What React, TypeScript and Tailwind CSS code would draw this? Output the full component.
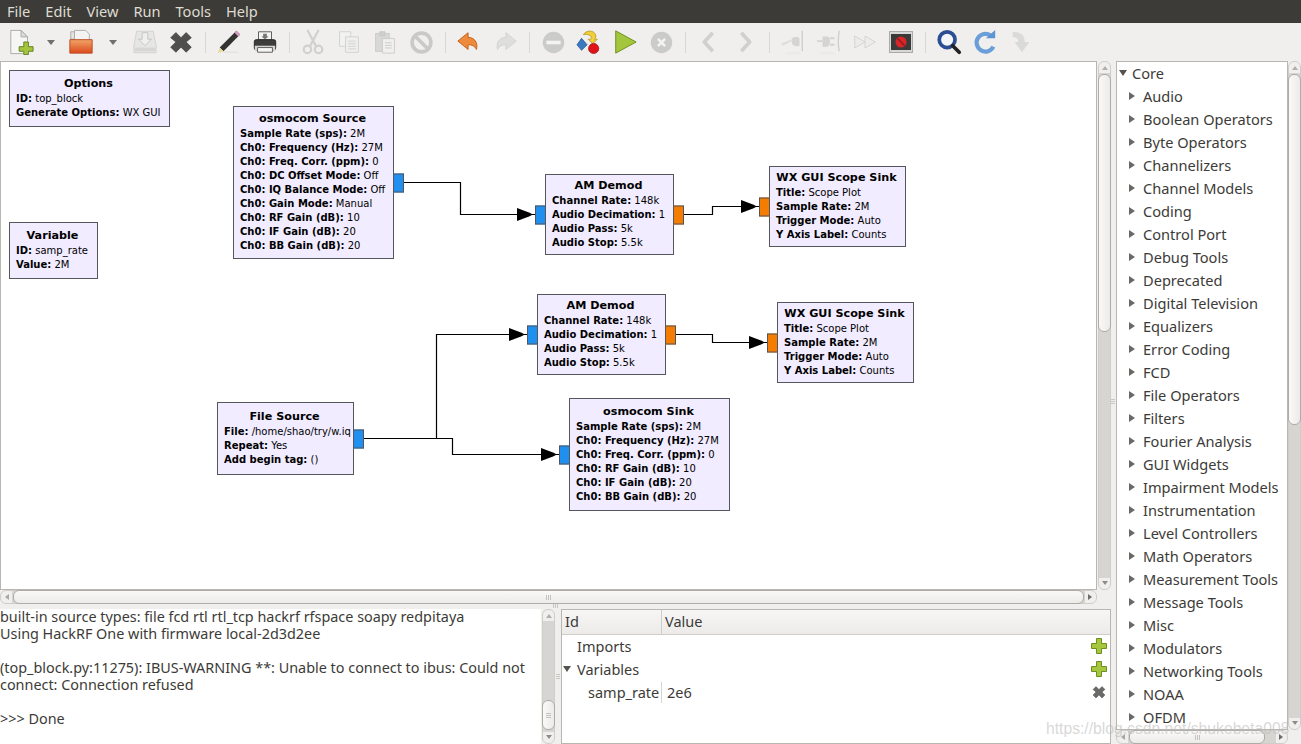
import React from "react";

const uiFont = "font-['Noto_Sans','Open_Sans',sans-serif]";
const blockFont = "font-['DejaVu_Sans',sans-serif]";

function Sheet() {
  return (
    <svg width="26" height="26" viewBox="0 0 28 28">
      <path d="M3 1.500h11l7 7v18H3z" fill="#f6f6f4" stroke="#a9a9a6" />
      <path d="M14 1.500v7h7z" fill="#dcdcd9" stroke="#a9a9a6" />
      <path d="M17 14h5v5h5v5h-5v3.500h-5V24h-5v-5h5z" fill="#a3c43c" stroke="#5f7f1e" />
    </svg>
  );
}

function Folder() {
  return (
    <svg width="26" height="26" viewBox="0 0 28 28">
      <defs>
        <linearGradient id="folderFill" x1="0" y1="0" x2="0" y2="1">
          <stop offset="0" stopColor="#f2a468" />
          <stop offset="1" stopColor="#dc4a1c" />
        </linearGradient>
      </defs>
      <path d="M3 3h5v8H3z" fill="#e4e4e2" stroke="#aaa" />
      <path d="M7 1.500h12l4 4v8H7z" fill="#f3f3f1" stroke="#aaa" />
      <path d="M2 11.500h24v14.500H2z" fill="url(#folderFill)" stroke="#b8471f" />
    </svg>
  );
}

function Save() {
  return (
    <svg width="26" height="26" viewBox="0 0 28 28">
      <path d="M5 2.500h18l3 16v7H2v-7z" fill="#e6e6e4" stroke="#d0d0ce" />
      <path d="M11 4h6v7h4l-7 7-7-7h4z" fill="#efefed" stroke="#c4c4c2" />
      <path d="M3 20h22v4H3z" fill="#d6d6d4" />
    </svg>
  );
}

function Cross({ size = 24, color = "#4f4f4d" }: { size?: number; color?: string }) {
  return (
    <svg width={size} height={size} viewBox="0 0 28 28">
      <path d="M8 3l6 6 6-6 6 6-6 5 6 6-6 6-6-6-6 6-6-6 6-6-6-5z" fill={color} stroke="#333" strokeWidth="0.7" />
    </svg>
  );
}

function Pencil() {
  return (
    <svg width="26" height="26" viewBox="0 0 28 28">
      <path d="M22 2l4 4L8 24l-4-4z" fill="#33332f" />
      <path d="M22 2l4 4-2 2-4-4z" fill="#d69bc0" />
      <path d="M4 20l4 4-6 2z" fill="#e8dc9c" />
      <path d="M8 25h16" stroke="#ddd" />
    </svg>
  );
}

function Printer() {
  return (
    <svg width="26" height="26" viewBox="0 0 28 28">
      <path d="M7 3h14v9H7z" fill="#f4f4f2" stroke="#555" />
      <path d="M12 5h4v3h2l-4 3-4-3h2z" fill="#777" />
      <rect x="2.500" y="11.500" width="23" height="11" rx="2" fill="#3d3d3b" stroke="#222" />
      <rect x="3" y="18" width="22" height="5" fill="#d4d4d2" />
      <path d="M6 20h16v5H6z" fill="#f6f6f4" stroke="#555" />
    </svg>
  );
}

function Scissors() {
  return (
    <svg width="26" height="26" viewBox="0 0 28 28" fill="none" stroke="#d0d0ce" strokeWidth="2.400">
      <path d="M8 1l9 17M20 1l-9 17" />
      <circle cx="8" cy="22" r="4" />
      <circle cx="20" cy="22" r="4" />
    </svg>
  );
}

function Copy() {
  return (
    <svg width="24" height="24" viewBox="0 0 28 28" stroke="#cfcfcd">
      <path d="M3 2h13v17H3z" fill="#f2f2f0" />
      <path d="M10 8h15v18H10z" fill="#efefed" />
      <path d="M13 13h9M13 16h9M13 19h9M13 22h9" />
    </svg>
  );
}

function Paste() {
  return (
    <svg width="24" height="24" viewBox="0 0 28 28" stroke="#c8c8c6">
      <path d="M3 4h16v21H3z" fill="#d8d8d6" />
      <path d="M8 2h6v5H8z" fill="#cfcfcd" />
      <path d="M11 10h14v17H11z" fill="#f0f0ee" />
      <path d="M14 15h8M14 18h8M14 21h8" />
    </svg>
  );
}

function NoEntry() {
  return (
    <svg width="25" height="25" viewBox="0 0 28 28" fill="none" stroke="#c9c9c7" strokeWidth="4">
      <circle cx="14" cy="14" r="10.500" />
      <path d="M7 7l14 14" />
    </svg>
  );
}

function Undo({ flip = false, active = true }: { flip?: boolean; active?: boolean }) {
  return (
    <svg width="26" height="26" viewBox="0 0 28 28" className={flip ? "-scale-x-100" : ""}>
      <path
        d="M13 4L2 13l11 9v-5c4 0 7 1 9 5 2-7-2-13-9-13z"
        fill={active ? "#ee8a3b" : "#dededc"}
        stroke={active ? "#c25e15" : "#d2d2d0"}
      />
    </svg>
  );
}

function Minus() {
  return (
    <svg width="25" height="25" viewBox="0 0 28 28">
      <circle cx="14" cy="14" r="12" fill="#cbcbc9" />
      <rect x="6" y="12" width="16" height="4" fill="#f4f4f2" />
    </svg>
  );
}

function Affinity() {
  return (
    <svg width="26" height="26" viewBox="0 0 28 28">
      <path d="M8 6c3-5 11-5 13 0 1 2 0 4-1 5h3l-5 5-5-5h3c2-3-2-6-8-5z" fill="#f0cf3a" stroke="#a68a12" strokeWidth="0.7" />
      <path d="M6 10l6 7-6 6-5-6z" fill="#3a7ac0" stroke="#1f4f8a" strokeWidth="0.7" />
      <circle cx="19" cy="21" r="5.500" fill="#e11218" stroke="#8a0a0e" strokeWidth="0.7" />
    </svg>
  );
}

function Play() {
  return (
    <svg width="26" height="26" viewBox="0 0 28 28">
      <path d="M4 2l22 12L4 26z" fill="#a3c63c" stroke="#6b8f1c" />
    </svg>
  );
}

function StopCircle() {
  return (
    <svg width="25" height="25" viewBox="0 0 28 28">
      <circle cx="14" cy="14" r="12" fill="#cbcbc9" />
      <path d="M10 10l8 8M18 10l-8 8" stroke="#f4f4f2" strokeWidth="2.800" />
    </svg>
  );
}

function Chevron({ right = false }: { right?: boolean }) {
  return (
    <svg width="26" height="26" viewBox="0 0 28 28" fill="none" stroke="#d0d0ce" strokeWidth="4" strokeLinejoin="round">
      <path d={right ? "M10 4l9 10-9 10" : "M18 4l-9 10 9 10"} />
    </svg>
  );
}

function PlugLeft() {
  return (
    <svg width="26" height="26" viewBox="0 0 28 28">
      <path d="M1 16l12-5v2l-10 5z" fill="#dcdcda" />
      <path d="M13 10c2-2 6-2 8 0v8c-3 1-6 1-8-2z" fill="#d4d4d2" />
      <path d="M24 2v22" stroke="#cfcfcd" strokeWidth="1.500" />
      <ellipse cx="14" cy="26" rx="9" ry="1.500" fill="#eaeae8" />
    </svg>
  );
}

function PlugRight() {
  return (
    <svg width="26" height="26" viewBox="0 0 28 28">
      <path d="M1 13h6M15 10h5M15 17h5" stroke="#d4d4d2" strokeWidth="2" />
      <path d="M7 8h5c2 0 3 2 3 5s-1 6-3 6H7z" fill="#d4d4d2" />
      <path d="M25 2q-2 12 0 22" stroke="#cfcfcd" fill="none" strokeWidth="1.500" />
      <ellipse cx="12" cy="26" rx="9" ry="1.500" fill="#eaeae8" />
    </svg>
  );
}

function FastForward() {
  return (
    <svg width="24" height="24" viewBox="0 0 28 28" fill="#ececea" stroke="#d0d0ce">
      <path d="M2 7l12 7-12 7z" />
      <path d="M14 7l12 7-12 7z" />
    </svg>
  );
}

function RecordBox() {
  return (
    <svg width="24" height="22" viewBox="0 0 24 22">
      <rect x="0.500" y="0.500" width="23" height="21" fill="#d8d8d6" stroke="#aaa" />
      <rect x="2" y="3" width="20" height="16" fill="#3a3a38" />
      <circle cx="12" cy="11" r="5.500" fill="#d6262a" />
      <path d="M8.500 7.500l7 7" stroke="#8e1518" strokeWidth="1.300" />
    </svg>
  );
}

function Search() {
  return (
    <svg width="26" height="26" viewBox="0 0 28 28" fill="none">
      <circle cx="12" cy="11.500" r="8.500" stroke="#2a4d93" strokeWidth="4" fill="#f3f5f8" />
      <path d="M18 18l7 7" stroke="#222" strokeWidth="4" strokeLinecap="round" />
    </svg>
  );
}

function Refresh() {
  return (
    <svg width="26" height="26" viewBox="0 0 28 28" fill="none">
      <path d="M20 7A9.500 9.500 0 1 0 23 19" stroke="#6a9ed8" strokeWidth="4.500" />
      <path d="M15 10h10V1z" fill="#5d95d4" />
    </svg>
  );
}

function DownCurve() {
  return (
    <svg width="26" height="26" viewBox="0 0 28 28">
      <path d="M5 3c9 0 13 4 13 11h5l-8 11-8-11h4c0-4-2-5-6-5z" fill="#dadad8" />
    </svg>
  );
}

function Tool({ children }: { children?: React.ReactNode }) {
  return <div className="w-9 h-9 flex items-center justify-center shrink-0">{children}</div>;
}

function Sep() {
  return (
    <div className="w-3 h-9 flex items-center justify-center shrink-0">
      <div className="w-px h-[21px] bg-[#d9d7d3]" />
    </div>
  );
}

function Drop({ wide = false }: { wide?: boolean }) {
  return (
    <div className={`${wide ? "w-7" : "w-6"} h-9 flex items-center justify-center shrink-0`}>
      <div className="border-x-[4px] border-x-transparent border-t-[5px] border-t-[#6f6f6c]" />
    </div>
  );
}

function Toolbar() {
  return (
    <div className="h-[38px] shrink-0 flex items-center pl-[3px] bg-[#f0efed]">
      <Tool><Sheet /></Tool>
      <Drop />
      <Tool><Folder /></Tool>
      <Drop wide />
      <Tool><Save /></Tool>
      <Tool><Cross /></Tool>
      <Sep />
      <Tool><Pencil /></Tool>
      <Tool><Printer /></Tool>
      <Sep />
      <Tool><Scissors /></Tool>
      <Tool><Copy /></Tool>
      <Tool><Paste /></Tool>
      <Tool><NoEntry /></Tool>
      <Sep />
      <Tool><Undo /></Tool>
      <Tool><Undo flip active={false} /></Tool>
      <Sep />
      <Tool><Minus /></Tool>
      <Tool><Affinity /></Tool>
      <Tool><Play /></Tool>
      <Tool><StopCircle /></Tool>
      <Sep />
      <Tool><Chevron /></Tool>
      <Tool><Chevron right /></Tool>
      <Sep />
      <Tool><PlugLeft /></Tool>
      <Tool><PlugRight /></Tool>
      <Tool><FastForward /></Tool>
      <Tool><RecordBox /></Tool>
      <Sep />
      <Tool><Search /></Tool>
      <Tool><Refresh /></Tool>
      <Tool><DownCurve /></Tool>
    </div>
  );
}

type BlockProps = {
  title: string;
  x: number;
  y: number;
  w: number;
  h: number;
  rows: [string, string][];
  inPort?: boolean;
  outPort?: "blue" | "orange";
  inColor?: "blue" | "orange";
};

const portColor = { blue: "bg-[#1f8ff0]", orange: "bg-[#f47c00]" };

function Block({ title, x, y, w, h, rows, inPort, outPort, inColor = "blue" }: BlockProps) {
  return (
    <div
      className={`absolute flex flex-col justify-center bg-[#f1ecff] border border-[#55555c] pl-[6px] ${blockFont} text-[10px] leading-[14px] text-black`}
      style={{ left: x, top: y, width: w, height: h }}
    >
      <div className="text-center font-bold text-[11.200px] h-[15px] pr-[8px]">{title}</div>
      {rows.map(([k, v]) => (
        <div key={k} className="whitespace-nowrap">
          <b>{k}:</b> {v}
        </div>
      ))}
      {inPort && (
        <div
          className={`absolute left-[-11px] top-1/2 -translate-y-1/2 w-[11px] h-[19px] border border-[#55555c] ${portColor[inColor]}`}
        />
      )}
      {outPort && (
        <div
          className={`absolute right-[-11px] top-1/2 -translate-y-1/2 w-[11px] h-[19px] border border-[#55555c] ${portColor[outPort]}`}
        />
      )}
    </div>
  );
}

function Wires() {
  // port left edge and wire row of each sink
  const arrows = [
    [535, 214.5],
    [759, 206.5],
    [527, 334.5],
    [767, 342.5],
    [559, 454.5],
  ];
  return (
    <svg className="absolute left-0 top-0" width="1096" height="528" viewBox="1 62 1096 528" fill="none" stroke="#000" strokeWidth="1.200">
      <path d="M404 182.500H460.500V214.500H535" />
      <path d="M684 214.500H712.500V206.500H759" />
      <path d="M363 438.500H436.500V334.500H527" />
      <path d="M676 334.500H712.500V342.500H767" />
      <path d="M436.500 438.500H452.500V454.500H559" />
      {arrows.map(([x, y]) => (
        <path key={`${x}-${y}`} d={`M${x - 18} ${y - 6.5}L${x - 6} ${y - 2}L${x - 2} ${y}L${x - 6} ${y + 2}L${x - 18} ${y + 6.5}z`} fill="#000" stroke="none" />
      ))}
    </svg>
  );
}

function Canvas() {
  return (
    <div className="relative flex-1 bg-white border border-[#b8b6b0] overflow-hidden">
      <Wires />
      <Block title="Options" x={8} y={8} w={161} h={57} rows={[["ID", "top_block"], ["Generate Options", "WX GUI"]]} />
      <Block title="Variable" x={8} y={160} w={89} h={57} rows={[["ID", "samp_rate"], ["Value", "2M"]]} />
      <Block
        title="osmocom Source"
        x={232}
        y={44}
        w={161}
        h={153}
        outPort="blue"
        rows={[
          ["Sample Rate (sps)", "2M"],
          ["Ch0: Frequency (Hz)", "27M"],
          ["Ch0: Freq. Corr. (ppm)", "0"],
          ["Ch0: DC Offset Mode", "Off"],
          ["Ch0: IQ Balance Mode", "Off"],
          ["Ch0: Gain Mode", "Manual"],
          ["Ch0: RF Gain (dB)", "10"],
          ["Ch0: IF Gain (dB)", "20"],
          ["Ch0: BB Gain (dB)", "20"],
        ]}
      />
      <Block
        title="AM Demod"
        x={544}
        y={112}
        w={129}
        h={81}
        inPort
        outPort="orange"
        rows={[["Channel Rate", "148k"], ["Audio Decimation", "1"], ["Audio Pass", "5k"], ["Audio Stop", "5.5k"]]}
      />
      <Block
        title="WX GUI Scope Sink"
        x={768}
        y={104}
        w={137}
        h={81}
        inPort
        inColor="orange"
        rows={[["Title", "Scope Plot"], ["Sample Rate", "2M"], ["Trigger Mode", "Auto"], ["Y Axis Label", "Counts"]]}
      />
      <Block
        title="AM Demod"
        x={536}
        y={232}
        w={129}
        h={81}
        inPort
        outPort="orange"
        rows={[["Channel Rate", "148k"], ["Audio Decimation", "1"], ["Audio Pass", "5k"], ["Audio Stop", "5.5k"]]}
      />
      <Block
        title="WX GUI Scope Sink"
        x={776}
        y={240}
        w={137}
        h={81}
        inPort
        inColor="orange"
        rows={[["Title", "Scope Plot"], ["Sample Rate", "2M"], ["Trigger Mode", "Auto"], ["Y Axis Label", "Counts"]]}
      />
      <Block
        title="File Source"
        x={216}
        y={340}
        w={137}
        h={73}
        outPort="blue"
        rows={[["File", "/home/shao/try/w.iq"], ["Repeat", "Yes"], ["Add begin tag", "()"]]}
      />
      <Block
        title="osmocom Sink"
        x={568}
        y={336}
        w={161}
        h={113}
        inPort
        rows={[
          ["Sample Rate (sps)", "2M"],
          ["Ch0: Frequency (Hz)", "27M"],
          ["Ch0: Freq. Corr. (ppm)", "0"],
          ["Ch0: RF Gain (dB)", "10"],
          ["Ch0: IF Gain (dB)", "20"],
          ["Ch0: BB Gain (dB)", "20"],
        ]}
      />
    </div>
  );
}

function VScroll({ thumbTop, thumbHeight, grip }: { thumbTop: number; thumbHeight: number; grip?: boolean }) {
  return (
    <div className="relative w-[13px] h-full shrink-0 bg-[#f0efed] border border-[#cfcdc8] rounded-[6px]">
      <div className="absolute top-[11px] bottom-[11px] left-0 right-0 bg-[#d7d5d1]" />
      <div className="absolute top-[4px] left-[3px] border-x-[3px] border-x-transparent border-b-[4px] border-b-[#b0aeaa]" />
      <div className="absolute bottom-[4px] left-[3px] border-x-[3px] border-x-transparent border-t-[4px] border-t-[#8e8c88]" />
      <div
        className="absolute left-[-1px] w-[13px] flex flex-col items-center justify-center gap-px bg-gradient-to-r from-[#faf9f8] to-[#ecebe8] border border-[#aeaca6] rounded-[6px]"
        style={{ top: thumbTop, height: thumbHeight }}
      >
        {grip && (
          <>
            <div className="w-[5px] h-px bg-[#c4c2bd]" />
            <div className="w-[5px] h-px bg-[#c4c2bd]" />
            <div className="w-[5px] h-px bg-[#c4c2bd]" />
          </>
        )}
      </div>
    </div>
  );
}

function HScroll({ thumbLeft, thumbWidth }: { thumbLeft: number; thumbWidth: number }) {
  return (
    <div className="relative h-[14px] w-full shrink-0 bg-[#f0efed] border border-[#cfcdc8] rounded-[6px]">
      <div className="absolute left-[11px] right-[11px] top-0 bottom-0 bg-[#d7d5d1]" />
      <div className="absolute left-[4px] top-[3px] border-y-[3px] border-y-transparent border-r-[4px] border-r-[#a8a6a2]" />
      <div className="absolute right-[4px] top-[3px] border-y-[3px] border-y-transparent border-l-[4px] border-l-[#6f6d69]" />
      <div
        className="absolute top-[-1px] h-[14px] flex items-center justify-center gap-px bg-gradient-to-b from-[#faf9f8] to-[#ecebe8] border border-[#aeaca6] rounded-[6px]"
        style={{ left: thumbLeft, width: thumbWidth }}
      >
        <div className="w-px h-[5px] bg-[#c4c2bd]" />
        <div className="w-px h-[5px] bg-[#c4c2bd]" />
        <div className="w-px h-[5px] bg-[#c4c2bd]" />
      </div>
    </div>
  );
}

const categories = [
  "Audio", "Boolean Operators", "Byte Operators", "Channelizers", "Channel Models", "Coding", "Control Port",
  "Debug Tools", "Deprecated", "Digital Television", "Equalizers", "Error Coding", "FCD", "File Operators",
  "Filters", "Fourier Analysis", "GUI Widgets", "Impairment Models", "Instrumentation", "Level Controllers",
  "Math Operators", "Measurement Tools", "Message Tools", "Misc", "Modulators", "Networking Tools", "NOAA", "OFDM",
];

function Arrow({ open = false }: { open?: boolean }) {
  return open ? (
    <div className="mb-[2px] border-x-[4px] border-x-transparent border-t-[6px] border-t-[#55534f]" />
  ) : (
    <div className="mb-[2px] border-y-[4px] border-y-transparent border-l-[6px] border-l-[#6a6864]" />
  );
}

function BlockTree() {
  return (
    <div className="w-[185px] ml-[5px] shrink-0 flex flex-col h-full">
      <div className="flex flex-1 min-h-0">
        <div className={`flex-1 min-w-0 bg-white border border-[#b8b6b0] overflow-hidden ${uiFont} text-[14.600px] text-[#3c3b37]`}>
          <div className="h-[23px] flex items-center pl-[1px] gap-[5px]">
            <div className="w-[9px] flex justify-center"><Arrow open /></div>
            <span>Core</span>
          </div>
          {categories.map((c) => (
            <div key={c} className="h-[23px] flex items-center pl-[12px] gap-[6px] whitespace-nowrap">
              <div className="w-[8px]"><Arrow /></div>
              <span>{c}</span>
            </div>
          ))}
        </div>
        <VScroll thumbTop={12} thumbHeight={351} />
      </div>
      <div className="pr-[13px] h-[14px] shrink-0">
        <HScroll thumbLeft={12} thumbWidth={136} />
      </div>
    </div>
  );
}

function Log() {
  return (
    <div className={`w-[541px] shrink-0 bg-white ${uiFont} text-[14.400px] leading-[17px] text-[#3c3b37] whitespace-nowrap`}>
      <div className="-mt-px">built-in source types: file fcd rtl rtl_tcp hackrf rfspace soapy redpitaya</div>
      <div>Using HackRF One with firmware local-2d3d2ee</div>
      <div className="h-[17px]" />
      <div>(top_block.py:11275): IBUS-WARNING **: Unable to connect to ibus: Could not</div>
      <div>connect: Connection refused</div>
      <div className="h-[17px]" />
      <div>&gt;&gt;&gt; Done</div>
    </div>
  );
}

function AddIcon() {
  return (
    <svg width="18" height="18" viewBox="0 0 18 18">
      <path d="M6.500 1.500h5v5h5v5h-5v5h-5v-5h-5v-5h5z" fill="#a6c63e" stroke="#6d8f22" />
    </svg>
  );
}

function VarTable() {
  return (
    <div className={`flex-1 min-w-0 ml-[6px] bg-white border border-[#b8b6b0] ${uiFont} text-[14.500px] text-[#3c3b37] overflow-hidden`}>
      <div className="flex h-[25px] bg-gradient-to-b from-[#f7f6f5] to-[#ecebe9] border-b border-[#cfcdc8]">
        <div className="w-[100px] border-r border-[#cfcdc8] pl-[3px] flex items-center">Id</div>
        <div className="flex-1 pl-[3px] flex items-center">Value</div>
      </div>
      <div className="h-[23px] flex items-center">
        <div className="w-[100px] pl-[15px]">Imports</div>
        <div className="flex-1 flex justify-end pr-[2px] -mt-[2px]"><AddIcon /></div>
      </div>
      <div className="h-[23px] flex items-center">
        <div className="w-[100px] pl-[1px] flex items-center gap-[6px]"><Arrow open /><span>Variables</span></div>
        <div className="flex-1 flex justify-end pr-[2px] -mt-[2px]"><AddIcon /></div>
      </div>
      <div className="h-[23px] flex items-center">
        <div className="w-[100px] pl-[26px] border-r border-[#d8d6d2] whitespace-nowrap">samp_rate</div>
        <div className="flex-1 pl-[5px]">2e6</div>
        <div className="pr-[4px] -mt-[2px]"><Cross size={14} color="#6a6a68" /></div>
      </div>
    </div>
  );
}

function Grip({ x, y, horizontal = false }: { x: number; y: number; horizontal?: boolean }) {
  return (
    <div
      className={`absolute flex gap-px ${horizontal ? "flex-row" : "flex-col"}`}
      style={{ left: x, top: y }}
    >
      <div className={`${horizontal ? "w-px h-[4px]" : "h-px w-[4px]"} bg-[#c8c6c1]`} />
      <div className={`${horizontal ? "w-px h-[4px]" : "h-px w-[4px]"} bg-[#c8c6c1]`} />
      <div className={`${horizontal ? "w-px h-[4px]" : "h-px w-[4px]"} bg-[#c8c6c1]`} />
    </div>
  );
}

export default function App() {
  return (
    <div className="w-[1301px] h-[744px] flex flex-col overflow-hidden bg-[#f0efed] relative">
      <div className={`h-[23px] shrink-0 bg-[#3c3b37] text-[#dfdbd2] ${uiFont} text-[14.600px] flex items-center pl-[7px] gap-[15px]`}>
        <span>File</span>
        <span>Edit</span>
        <span>View</span>
        <span>Run</span>
        <span>Tools</span>
        <span>Help</span>
      </div>
      <Toolbar />
      <div className="flex flex-1 min-h-0">
        <div className="flex-1 min-w-0 flex flex-col">
          <div className="h-[529px] shrink-0 flex">
            <Canvas />
            <div className="pl-px h-full"><VScroll thumbTop={12} thumbHeight={258} /></div>
          </div>
          <div className="h-[14px] shrink-0 pr-[14px]">
            <HScroll thumbLeft={12} thumbWidth={1071} />
          </div>
          <div className="h-[5px] shrink-0" />
          <div className="flex-1 min-h-0 flex">
            <Log />
            <div className="pl-px h-full shrink-0"><VScroll thumbTop={90} thumbHeight={30} grip /></div>
            <VarTable />
          </div>
        </div>
        <BlockTree />
      </div>
      <Grip x={1111} y={399} />
      <Grip x={556} y={674} />
      <Grip x={553} y={604} horizontal />
      <div className="absolute left-[1046px] top-[717px] text-[15.700px] text-[#bdbdbd]/60 font-['Liberation_Sans',sans-serif] whitespace-nowrap">
        https://blog.csdn.net/shukebeta008
      </div>
    </div>
  );
}
